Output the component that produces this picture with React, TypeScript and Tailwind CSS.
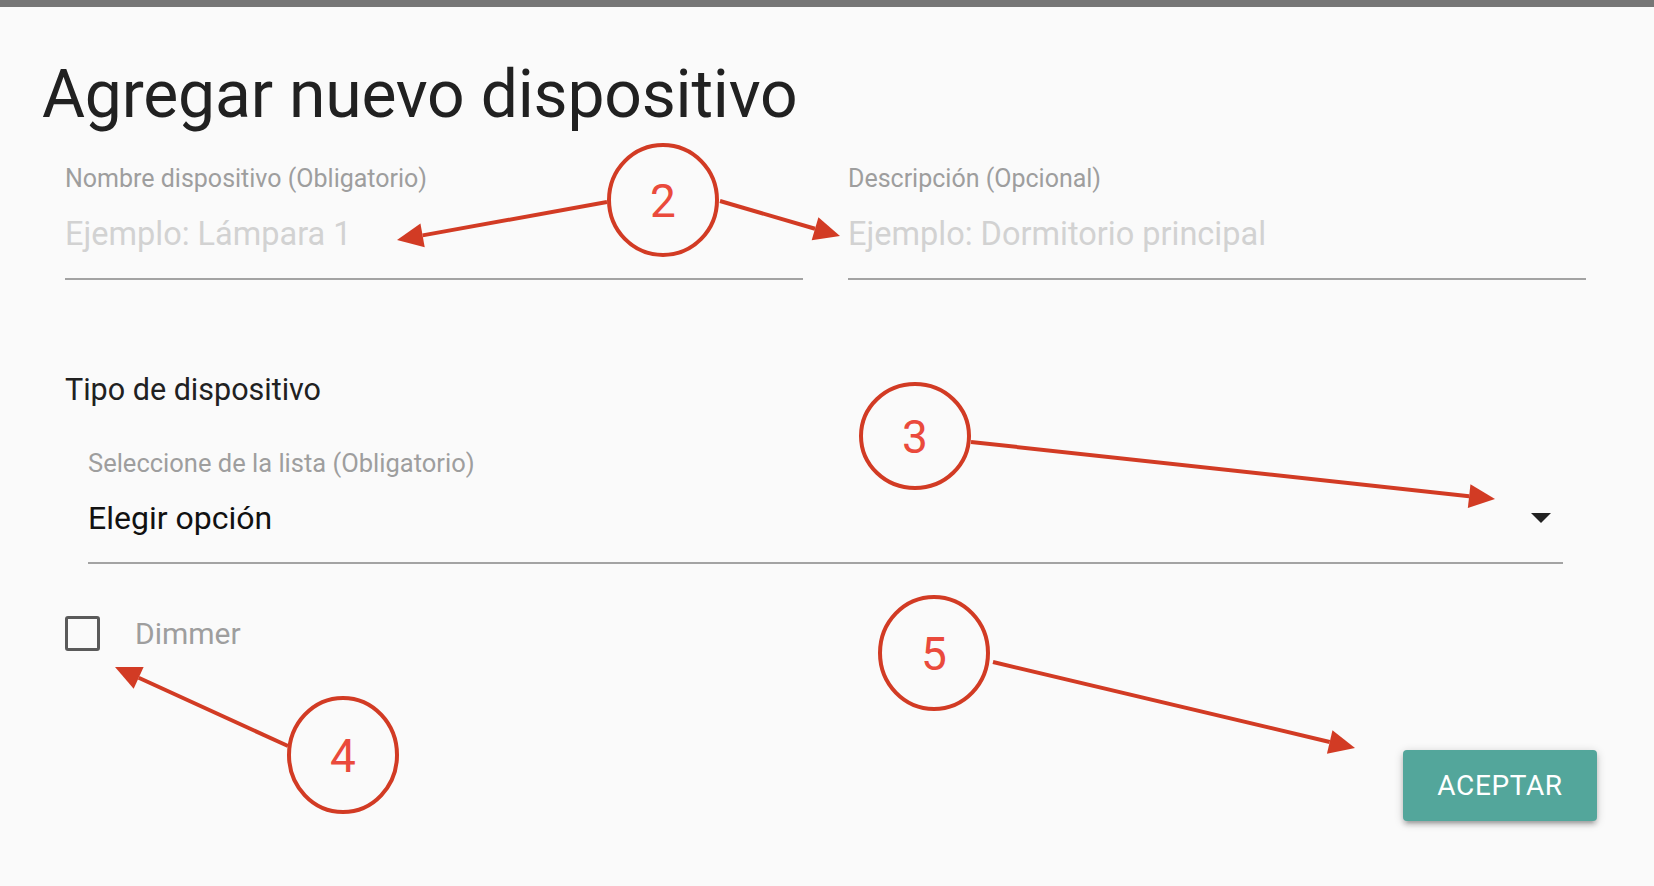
import React from 'react';

type Arrow = { from: [number, number]; to: [number, number] };

const BUBBLES = [
  { n: '2', cx: 663, cy: 200, rx: 54, ry: 55 },
  { n: '3', cx: 915, cy: 436, rx: 54, ry: 52 },
  { n: '4', cx: 343, cy: 755, rx: 54, ry: 57 },
  { n: '5', cx: 934, cy: 653, rx: 54, ry: 56 },
];

const ARROWS: Arrow[] = [
  { from: [607, 202], to: [397, 240] },
  { from: [720, 201], to: [840, 236] },
  { from: [971, 442], to: [1495, 499] },
  { from: [288, 746], to: [115, 667] },
  { from: [993, 662], to: [1355, 748] },
];

// line + triangle head, head size fixed
function arrowParts({ from, to }: Arrow) {
  const dx = to[0] - from[0];
  const dy = to[1] - from[1];
  const len = Math.hypot(dx, dy);
  const ux = dx / len;
  const uy = dy / len;
  const bx = to[0] - ux * 26;
  const by = to[1] - uy * 26;
  const px = -uy * 12;
  const py = ux * 12;
  return {
    base: [bx, by],
    head: `${to[0]},${to[1]} ${bx + px},${by + py} ${bx - px},${by - py}`,
  };
}

const Annotations: React.FC = () => (
  <svg className="absolute inset-0 pointer-events-none" width={1654} height={886} viewBox="0 0 1654 886">
    {ARROWS.map((a, i) => {
      const p = arrowParts(a);
      return (
        <g key={i}>
          <line x1={a.from[0]} y1={a.from[1]} x2={p.base[0]} y2={p.base[1]} stroke="#d23b24" strokeWidth={4} />
          <polygon points={p.head} fill="#d23b24" />
        </g>
      );
    })}
    {BUBBLES.map(b => (
      <g key={b.n}>
        <ellipse cx={b.cx} cy={b.cy} rx={b.rx} ry={b.ry} fill="none" stroke="#d23b24" strokeWidth={4} />
        <text
          x={b.cx}
          y={b.cy + 17}
          textAnchor="middle"
          fontSize={46}
          fontFamily="Roboto, 'Liberation Sans', sans-serif"
          fill="#ea4a3c"
        >
          {b.n}
        </text>
      </g>
    ))}
  </svg>
);

const TextField: React.FC<{ label: string; placeholder: string }> = ({ label, placeholder }) => (
  <div className="flex flex-col">
    <label className="text-[25px] leading-[30px] text-[#9e9e9e]">{label}</label>
    <input
      className="mt-[20px] h-[40px] text-[32.5px] leading-[40px] bg-transparent outline-none placeholder:text-[#d2d2d2] text-[#212121]"
      placeholder={placeholder}
    />
    <div className="mt-[24px] h-[2px] bg-[#a3a3a3]" />
  </div>
);

export default function App() {
  return (
    <div className="relative min-h-screen bg-[#fafafa] font-['Roboto','Liberation_Sans',sans-serif]">
      <div className="h-[7px] bg-[#767676]" />
      <div className="pl-[42px] pr-[45px]">
        <h1 className="mt-[55px] text-[66px] leading-[66px] text-[#212121] tracking-[-0.2px]">
          Agregar nuevo dispositivo
        </h1>

        <div className="px-[23px]">
          <div className="grid grid-cols-2 gap-x-[45px] mt-[36px]">
            <TextField label="Nombre dispositivo (Obligatorio)" placeholder="Ejemplo: Lámpara 1" />
            <TextField label="Descripción (Opcional)" placeholder="Ejemplo: Dormitorio principal" />
          </div>

          <h2 className="mt-[92px] text-[30.5px] leading-[36px] text-[#212121]">Tipo de dispositivo</h2>

          <div className="px-[23px] mt-[40px]">
            <div className="text-[25.5px] leading-[30px] text-[#9e9e9e]">Seleccione de la lista (Obligatorio)</div>
            <div className="mt-[20px] h-[40px] flex items-center justify-between pr-[12px]">
              <span className="text-[32px] leading-[40px] text-[#111]">Elegir opción</span>
              <span className="w-0 h-0 border-l-[10px] border-r-[10px] border-t-[10px] border-l-transparent border-r-transparent border-t-[#222]" />
            </div>
            <div className="mt-[24px] h-[2px] bg-[#a3a3a3]" />
          </div>

          <label className="mt-[52px] flex items-center h-[35px]">
            <span className="w-[35px] h-[35px] border-[3px] border-[#5a5a5a] rounded-[3px]" />
            <span className="ml-[35px] text-[30px] leading-[35px] text-[#9e9e9e]">Dimmer</span>
          </label>
        </div>

        <div className="flex justify-end pr-[12px] mt-[99px]">
          <button className="w-[194px] h-[71px] rounded-[4px] bg-[#53a69b] text-white text-[28px] tracking-[0.6px] uppercase shadow-[0_4px_4px_0_rgba(0,0,0,0.14),0_6px_2px_-4px_rgba(0,0,0,0.12),0_2px_10px_0_rgba(0,0,0,0.2)]">
            Aceptar
          </button>
        </div>
      </div>
      <Annotations />
    </div>
  );
}
